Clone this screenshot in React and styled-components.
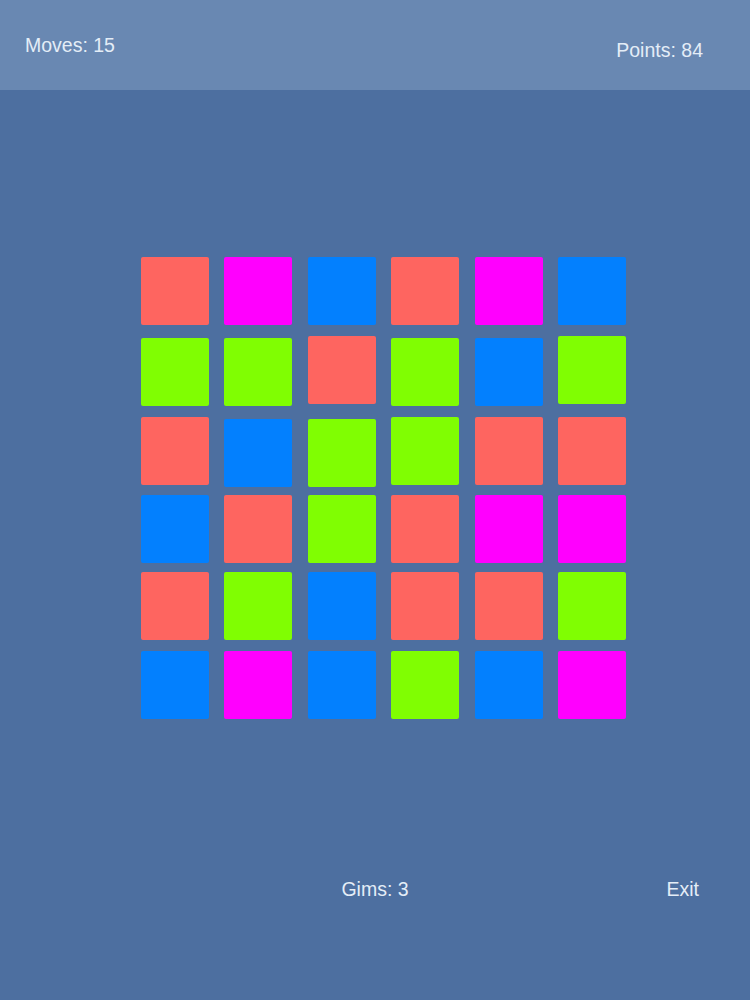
import React from "react";
import styled, { createGlobalStyle } from "styled-components";

const GlobalStyle = createGlobalStyle`
  html, body {
    margin: 0;
    padding: 0;
    background: #4d6fa0;
  }
  body {
    font-family: "Liberation Sans", Arial, sans-serif;
  }
`;

const Page = styled.div`
  width: 750px;
  height: 1000px;
  background: #4d6fa0;
  display: flex;
  flex-direction: column;
  overflow: hidden;
`;

const Header = styled.header`
  height: 90px;
  background: #6988b2;
  display: flex;
  justify-content: space-between;
  align-items: flex-start;
  padding: 0 47px 0 25px;
  box-sizing: border-box;
`;

const Label = styled.span`
  display: block;
  font-size: 19.5px;
  line-height: 24px;
  color: #e4edf7;
  margin-top: ${(p) => p.$top || 0}px;
`;

const Board = styled.div`
  display: flex;
  flex-direction: column;
  padding-left: 141px;
  margin-top: 167px;
`;

const Row = styled.div`
  display: flex;
  gap: 15.4px;
  margin-top: ${(p) => p.$top || 0}px;
`;

const COLORS = {
  R: "#fe6560",
  M: "#ff00fe",
  B: "#0380fe",
  G: "#80fe02",
};

const Tile = styled.div`
  width: 68px;
  height: 68px;
  border-radius: 2px;
  background: ${(p) => COLORS[p.$c]};
  transform: translateY(${(p) => p.$dy || 0}px);
`;

const Footer = styled.footer`
  display: grid;
  grid-template-columns: 1fr auto 1fr;
  align-items: start;
  margin-top: 158px;
`;

const Center = styled(Label)`
  grid-column: 2;
`;

const Right = styled(Label)`
  grid-column: 3;
  justify-self: end;
  margin-right: 51px;
  cursor: pointer;
`;

const rows = [
  { top: 0, tiles: "RMBRMB" },
  { top: 13, tiles: "GGRGBG", dy: { 2: -2, 5: -2 } },
  { top: 11, tiles: "RBGGRR", dy: { 1: 2, 2: 2 } },
  { top: 10, tiles: "BRGRMM" },
  { top: 9, tiles: "RGBRRG" },
  { top: 11, tiles: "BMBGBM" },
];

export default function App() {
  return (
    <>
      <GlobalStyle />
      <Page>
        <Header>
          <Label $top={33}>Moves: 15</Label>
          <Label $top={38}>Points: 84</Label>
        </Header>
        <Board>
          {rows.map((r, i) => (
            <Row key={i} $top={r.top}>
              {r.tiles.split("").map((c, j) => (
                <Tile key={j} $c={c} $dy={r.dy ? r.dy[j] : 0} />
              ))}
            </Row>
          ))}
        </Board>
        <Footer>
          <Center>Gims: 3</Center>
          <Right>Exit</Right>
        </Footer>
      </Page>
    </>
  );
}
